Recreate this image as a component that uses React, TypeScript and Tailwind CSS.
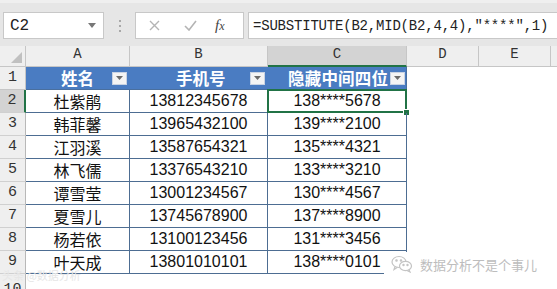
import React from "react";

const rows = [
  ["杜紫鹃", "13812345678", "138****5678"],
  ["韩菲馨", "13965432100", "139****2100"],
  ["江羽溪", "13587654321", "135****4321"],
  ["林飞儒", "13376543210", "133****3210"],
  ["谭雪莹", "13001234567", "130****4567"],
  ["夏雪儿", "13745678900", "137****8900"],
  ["杨若依", "13100123456", "131****3456"],
  ["叶天成", "13801010101", "138****0101"],
];

const mono = { fontFamily: '"Liberation Mono", "DejaVu Sans Mono", monospace' };
const cjk = { fontFamily: '"Noto Sans CJK SC", "Noto Sans", sans-serif' };
const arial = { fontFamily: '"Liberation Sans", Arial, sans-serif' };

function FilterBtn() {
  return (
    <div className="w-[15px] h-[13px] bg-[#f4f4f4] border border-[#c9d3e3] flex items-center justify-center">
      <svg width="7" height="4" viewBox="0 0 7 4">
        <path d="M0 0 L7 0 L3.5 4 Z" fill="#6b6b6b" />
      </svg>
    </div>
  );
}

function WeChat() {
  return (
    <svg width="22" height="18" viewBox="0 0 22 18" fill="none" stroke="#c4c4c4" strokeWidth="1.2">
      <ellipse cx="8" cy="7" rx="7" ry="5.5" />
      <path d="M4 11.5 L3 14.5 L6.5 12.3" />
      <ellipse cx="14.5" cy="11" rx="6" ry="4.6" fill="white" />
      <path d="M18 14.8 L19 17 L16 15.5" />
      <circle cx="5.5" cy="5.5" r="0.7" fill="#c4c4c4" />
      <circle cx="10" cy="5.5" r="0.7" fill="#c4c4c4" />
      <circle cx="12.5" cy="10" r="0.6" fill="#c4c4c4" />
      <circle cx="16.5" cy="10" r="0.6" fill="#c4c4c4" />
    </svg>
  );
}

export default function App() {
  const cols = "grid-cols-[26px_104px_138px_139px_72px_72px_1fr]";
  return (
    <div className="w-[557px] h-[289px] overflow-hidden bg-white relative">
      {/* Toolbar */}
      <div className="h-[46px] bg-[#e6e6e6] border-t-[3px] border-[#efefef] flex items-start pt-[9px]">
        <div className="ml-[3px] w-[101px] h-[27px] bg-white border border-[#c8c8c8] flex items-center justify-between pl-[6px] pr-[7px]">
          <span className="text-[16px] text-[#222] leading-none" style={mono}>C2</span>
          <svg width="8" height="5" viewBox="0 0 8 5"><path d="M0 0 L8 0 L4 5 Z" fill="#777" /></svg>
        </div>
        <div className="w-[31px] h-[27px] flex flex-col items-center justify-center gap-[3px]">
          <div className="w-[2px] h-[2px] bg-[#a8a8a8]" />
          <div className="w-[2px] h-[2px] bg-[#a8a8a8]" />
          <div className="w-[2px] h-[2px] bg-[#a8a8a8]" />
        </div>
        <div className="w-[109px] h-[27px] bg-white border border-[#c8c8c8] flex items-center">
          <svg className="ml-[13px]" width="11" height="11" viewBox="0 0 11 11" stroke="#b4b4b4" strokeWidth="1.4">
            <path d="M1 1 L10 10 M10 1 L1 10" />
          </svg>
          <svg className="ml-[24px]" width="13" height="11" viewBox="0 0 13 11" stroke="#b4b4b4" strokeWidth="1.6" fill="none">
            <path d="M1 6 L5 10 L12 1" />
          </svg>
          <span className="ml-[18px] text-[15px] italic text-[#444] leading-none" style={{ fontFamily: '"Liberation Serif", serif' }}>
            f<span className="text-[12px]">x</span>
          </span>
        </div>
        <div className="ml-[4px] flex-1 h-[27px] bg-white border border-[#c8c8c8] border-r-0 flex items-center pl-[4px]">
          <span className="text-[14px] tracking-[-0.2px] text-[#222] leading-none whitespace-nowrap" style={mono}>
            =SUBSTITUTE(B2,MID(B2,4,4),"****",1)
          </span>
        </div>
      </div>

      {/* Sheet grid */}
      <div className={`grid ${cols} grid-rows-[21px_repeat(10,23px)]`}>
        {/* Column headers */}
        <div className="bg-[#efefef] border-r border-b border-[#c6c6c6] relative">
          <svg className="absolute right-[3px] bottom-[3px]" width="11" height="11" viewBox="0 0 11 11">
            <path d="M11 0 L11 11 L0 11 Z" fill="#c0c0c0" />
          </svg>
        </div>
        {["A", "B"].map((c) => (
          <div key={c} className="bg-[#efefef] border-r border-b border-[#c6c6c6] flex items-end justify-center pb-[1px] text-[14px] text-[#333]" style={mono}>
            {c}
          </div>
        ))}
        <div className="bg-[#d3d3d3] border-r border-[#c6c6c6] border-b-2 border-b-[#217346] flex items-end justify-center text-[14px] text-[#333]" style={mono}>
          C
        </div>
        {["D", "E"].map((c) => (
          <div key={c} className="bg-[#efefef] border-r border-b border-[#c6c6c6] flex items-end justify-center pb-[1px] text-[14px] text-[#333]" style={mono}>
            {c}
          </div>
        ))}
        <div className="bg-[#efefef] border-b border-[#c6c6c6]" />

        {/* Row 1: table header */}
        <div className="bg-[#efefef] border-r border-b border-[#c6c6c6] flex items-end justify-center text-[15px] text-[#333]" style={mono}>1</div>
        <div className="bg-[#4a7cc2] border-b border-[#4a6f9e] flex items-center pl-[35px] pr-[3px]">
          <span className="text-[16.5px] font-bold text-white leading-none flex-1" style={cjk}>姓名</span>
          <FilterBtn />
        </div>
        <div className="bg-[#4a7cc2] border-b border-[#4a6f9e] flex items-center pl-[46px] pr-[3px]">
          <span className="text-[16.5px] font-bold text-white leading-none flex-1" style={cjk}>手机号</span>
          <FilterBtn />
        </div>
        <div className="bg-[#4a7cc2] border-b border-r border-[#4a6f9e] flex items-center pl-[20px] pr-[1px]">
          <span className="text-[16.5px] font-bold text-white leading-none flex-1 tracking-[0.2px]" style={cjk}>隐藏中间四位</span>
          <FilterBtn />
        </div>
        <div />
        <div />
        <div />

        {/* Data rows */}
        {rows.map((r, i) => {
          const sel = i === 0;
          return (
            <React.Fragment key={i}>
              <div
                className={`${sel ? "bg-[#d3d3d3] border-r-2 border-r-[#217346]" : "bg-[#efefef] border-r border-r-[#b8b8b8]"} border-b border-b-[#d0d0d0] flex items-end justify-center text-[15px] text-[#333]`}
                style={mono}
              >
                {i + 2}
              </div>
              <div className="border-r border-b border-[#4d6d92] flex items-center justify-center text-[16px] text-[#111] leading-none" style={cjk}>
                {r[0]}
              </div>
              <div className="border-r border-b border-[#4d6d92] flex items-center justify-center text-[16px] text-[#111] leading-none" style={arial}>
                {r[1]}
              </div>
              <div className="border-r border-b border-[#4d6d92] flex items-center justify-center text-[16px] text-[#111] leading-none relative" style={arial}>
                {r[2]}
                {sel && (
                  <>
                    <div className="absolute -left-[1px] -top-[1px] -right-[1px] -bottom-[1px] border-2 border-[#217346]" />
                    <div className="absolute -right-[4px] -bottom-[4px] w-[7px] h-[7px] bg-[#217346] border border-white" />
                  </>
                )}
              </div>
              <div />
              <div />
              <div />
            </React.Fragment>
          );
        })}

        {/* Row 10 */}
        <div className="bg-[#efefef] border-r border-[#b8b8b8] flex items-end justify-center text-[15px] text-[#333] leading-none" style={mono}>
          10
        </div>
        <div />
        <div />
        <div />
        <div />
        <div />
        <div />
      </div>

      {/* Watermark right */}
      <div className="absolute left-[384px] top-[252px] w-[173px] h-[37px] bg-white">
        <div className="flex items-center mt-[3px] ml-[7px] gap-[7px]">
          <WeChat />
          <span className="text-[13px] text-[#bdbdbd] leading-none" style={cjk}>数据分析不是个事儿</span>
        </div>
      </div>

      {/* Watermark left (faint) */}
      <div className="absolute left-[2px] top-[270px] text-[11px] text-[#e6e6e6] leading-none" style={cjk}>
        头条 @数据分析
      </div>
    </div>
  );
}
